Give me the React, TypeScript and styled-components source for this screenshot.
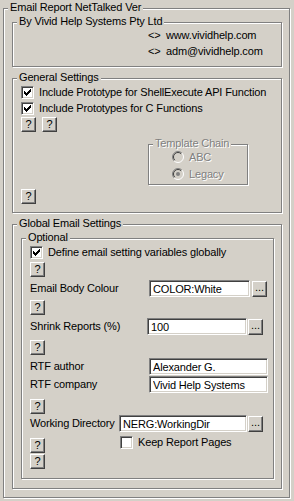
import React from "react";
import styled, { createGlobalStyle } from "styled-components";

const BG = "#d4d0c8";

const GlobalStyle = createGlobalStyle`
  html, body {
    margin: 0;
    padding: 0;
    background: ${BG};
  }
  body {
    font-family: "Liberation Sans", Arial, sans-serif;
    font-size: 11px;
    letter-spacing: -0.15px;
    color: #000;
  }
`;

const Dialog = styled.div`
  width: 294px;
  height: 501px;
  box-sizing: border-box;
  padding: 8px 0 0 3px;
`;

const GroupBox = styled.div<{ $pad: string; $w?: number; $gap?: number }>`
  position: relative;
  box-sizing: border-box;
  display: flex;
  flex-direction: column;
  gap: ${(p) => p.$gap ?? 0}px;
  width: ${(p) => (p.$w ? `${p.$w}px` : "auto")};
  padding: ${(p) => p.$pad};
  border: 1px solid #808080;
  box-shadow: inset 1px 1px 0 #fff, 1px 1px 0 #fff;
`;

const Caption = styled.span<{ $disabled?: boolean }>`
  position: absolute;
  top: -8px;
  left: 4px;
  padding: 0 2px;
  background: ${BG};
  line-height: 13px;
  white-space: nowrap;
  color: ${(p) => (p.$disabled ? "#808080" : "#000")};
  text-shadow: ${(p) => (p.$disabled ? "1px 1px 0 #fff" : "none")};
`;

const LinkRow = styled.div`
  display: grid;
  grid-template-columns: 18px auto;
  line-height: 13px;
  white-space: nowrap;
`;

const Spacer = styled.div<{ $h: number }>`
  height: ${(p) => p.$h}px;
  flex: none;
`;

const CheckRow = styled.label<{ $indent?: number }>`
  display: flex;
  align-items: center;
  height: 13px;
  line-height: 13px;
  margin-left: ${(p) => p.$indent ?? 0}px;
  white-space: nowrap;
  gap: 5px;
`;

const CheckBox = styled.span`
  box-sizing: border-box;
  width: 13px;
  height: 13px;
  flex: none;
  display: flex;
  align-items: center;
  justify-content: center;
  background: #fff;
  border: 1px solid;
  border-color: #808080 #fff #fff #808080;
  box-shadow: inset 1px 1px 0 #404040, inset -1px -1px 0 ${BG};
`;

const RadioRow = styled.div`
  display: flex;
  align-items: center;
  height: 13px;
  gap: 5px;
  color: #808080;
  text-shadow: 1px 1px 0 #fff;
  white-space: nowrap;
`;

const Push = styled.button<{ $w: number; $h: number }>`
  box-sizing: border-box;
  width: ${(p) => p.$w}px;
  height: ${(p) => p.$h}px;
  flex: none;
  padding: 0;
  margin: 0;
  background: ${BG};
  border: 1px solid;
  border-color: #fff #404040 #404040 #fff;
  box-shadow: inset -1px -1px 0 #808080;
  font-family: "Liberation Sans", Arial, sans-serif;
  font-size: 11px;
  line-height: 11px;
  color: #000;
  display: flex;
  align-items: center;
  justify-content: center;
`;

const HelpRow = styled.div`
  display: flex;
  gap: 6px;
`;

const TemplateSlot = styled.div`
  margin-left: 127px;
`;

const FieldRow = styled.div`
  display: flex;
  align-items: center;
  height: 17px;
`;

const FieldLabel = styled.span<{ $w: number }>`
  width: ${(p) => p.$w}px;
  flex: none;
  white-space: nowrap;
  line-height: 13px;
`;

const TextBox = styled.input<{ $w: number }>`
  box-sizing: border-box;
  width: ${(p) => p.$w}px;
  height: 17px;
  flex: none;
  margin: 0;
  padding: 0 0 0 3px;
  background: #fff;
  border: 1px solid;
  border-color: #808080 #fff #fff #808080;
  box-shadow: inset 1px 1px 0 #404040, inset -1px -1px 0 ${BG};
  font-family: "Liberation Sans", Arial, sans-serif;
  font-size: 11px;
  letter-spacing: -0.15px;
  color: #000;
  outline: none;
`;

const Browse = styled(Push)<{ $gap: number }>`
  margin-left: ${(p) => p.$gap}px;
  align-items: flex-end;
  padding-bottom: 3px;
`;

const KeepRow = styled.div`
  display: flex;
  align-items: flex-start;
`;

const Nudge = styled.div<{ $top: number }>`
  margin-top: ${(p) => p.$top}px;
`;

function CheckMark() {
  const cols = [2, 3, 4, 3, 2, 1, 0];
  return (
    <svg width="7" height="7" viewBox="0 0 7 7" shapeRendering="crispEdges">
      {cols.map((y, x) => (
        <rect key={x} x={x} y={y} width="1" height="3" fill="#000" />
      ))}
    </svg>
  );
}

function Check({ label, checked, indent }: { label: string; checked?: boolean; indent?: number }) {
  return (
    <CheckRow $indent={indent}>
      <CheckBox>{checked && <CheckMark />}</CheckBox>
      <span>{label}</span>
    </CheckRow>
  );
}

function RadioDot({ on }: { on?: boolean }) {
  return (
    <svg width="12" height="12" viewBox="0 0 12 12">
      <circle cx="6" cy="6" r="5" fill={BG} />
      <path d="M2.1 9.9 A5.5 5.5 0 0 1 9.9 2.1" fill="none" stroke="#808080" strokeWidth="1" />
      <path d="M2.8 9.2 A4.5 4.5 0 0 1 9.2 2.8" fill="none" stroke="#404040" strokeWidth="1" />
      <path d="M9.9 2.1 A5.5 5.5 0 0 1 2.1 9.9" fill="none" stroke="#fff" strokeWidth="1" />
      {on && <circle cx="6" cy="6" r="2" fill="#808080" />}
    </svg>
  );
}

function Radio({ label, on }: { label: string; on?: boolean }) {
  return (
    <RadioRow>
      <RadioDot on={on} />
      <span>{label}</span>
    </RadioRow>
  );
}

function Help() {
  return (
    <Push $w={15} $h={15} type="button">
      ?
    </Push>
  );
}

function Field({
  label,
  labelWidth,
  value,
  width,
  browseGap,
}: {
  label: string;
  labelWidth: number;
  value: string;
  width: number;
  browseGap?: number;
}) {
  return (
    <FieldRow>
      <FieldLabel $w={labelWidth}>{label}</FieldLabel>
      <TextBox $w={width} defaultValue={value} readOnly />
      {browseGap !== undefined && (
        <Browse $w={15} $h={16} $gap={browseGap} type="button">
          ...
        </Browse>
      )}
    </FieldRow>
  );
}

export default function App() {
  return (
    <>
      <GlobalStyle />
      <Dialog>
        <GroupBox $w={287} $pad="13px 7px 8px 8px" $gap={11}>
          <Caption>Email Report NetTalked Ver</Caption>

          <GroupBox $pad="6px 8px 8px 135px" $gap={3}>
            <Caption>By Vivid Help Systems Pty Ltd</Caption>
            <LinkRow>
              <span>&lt;&gt;</span>
              <span>www.vividhelp.com</span>
            </LinkRow>
            <LinkRow>
              <span>&lt;&gt;</span>
              <span>adm@vividhelp.com</span>
            </LinkRow>
          </GroupBox>

          <GroupBox $pad="7px 8px 8px 8px">
            <Caption>General Settings</Caption>
            <Check label="Include Prototype for ShellExecute API Function" checked />
            <Spacer $h={3} />
            <Check label="Include Prototypes for C Functions" checked />
            <Spacer $h={2} />
            <HelpRow>
              <Help />
              <Help />
            </HelpRow>
            <Spacer $h={12} />
            <TemplateSlot>
              <GroupBox $w={100} $pad="5px 4px 4px 23px" $gap={4}>
                <Caption $disabled>Template Chain</Caption>
                <Radio label="ABC" />
                <Radio label="Legacy" on />
              </GroupBox>
            </TemplateSlot>
            <Spacer $h={4} />
            <HelpRow>
              <Help />
            </HelpRow>
          </GroupBox>

          <GroupBox $pad="13px 7px 9px 8px">
            <Caption>Global Email Settings</Caption>
            <GroupBox $pad="7px 8px 9px 8px">
              <Caption>Optional</Caption>
              <Check label="Define email setting variables globally" checked />
              <Spacer $h={3} />
              <HelpRow>
                <Help />
              </HelpRow>
              <Spacer $h={3} />
              <Field label="Email Body Colour" labelWidth={119} value="COLOR:White" width={101} browseGap={2} />
              <Spacer $h={3} />
              <HelpRow>
                <Help />
              </HelpRow>
              <Spacer $h={3} />
              <Field label="Shrink Reports (%)" labelWidth={117} value="100" width={100} browseGap={1} />
              <Spacer $h={5} />
              <HelpRow>
                <Help />
              </HelpRow>
              <Spacer $h={3} />
              <Field label="RTF author" labelWidth={119} value="Alexander G." width={119} />
              <Spacer $h={1} />
              <Field label="RTF company" labelWidth={119} value="Vivid Help Systems" width={119} />
              <Spacer $h={6} />
              <HelpRow>
                <Help />
              </HelpRow>
              <Spacer $h={1} />
              <Field label="Working Directory" labelWidth={89} value="NERG:WorkingDir" width={128} browseGap={1} />
              <Spacer $h={4} />
              <KeepRow>
                <Nudge $top={2}>
                  <Help />
                </Nudge>
                <Check label="Keep Report Pages" indent={75} />
              </KeepRow>
              <Spacer $h={1} />
              <HelpRow>
                <Help />
              </HelpRow>
            </GroupBox>
          </GroupBox>
        </GroupBox>
      </Dialog>
    </>
  );
}
